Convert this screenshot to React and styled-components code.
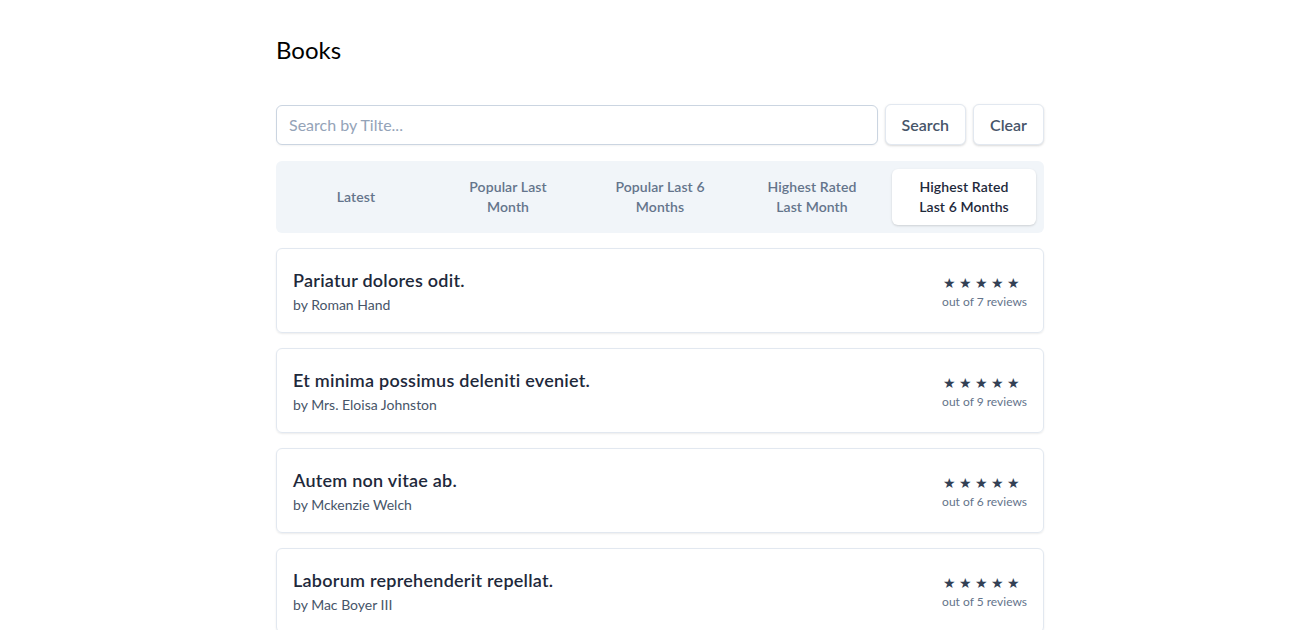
import React from 'react';
import styled, { createGlobalStyle } from 'styled-components';

const GlobalStyle = createGlobalStyle`
  * { box-sizing: border-box; }
  body {
    margin: 0;
    background: #fff;
    font-family: Lato, "Noto Sans", sans-serif;
    color: #0f172a;
  }
`;

const Page = styled.div`
  width: 780px;
  margin: 0 auto;
  padding: 34px 0 0 12px;
`;

const Title = styled.h1`
  margin: 0 0 38px;
  font-size: 24px;
  line-height: 32px;
  font-weight: 400;
  color: #000;
`;

const SearchRow = styled.form`
  display: flex;
  align-items: center;
  gap: 7px;
  margin-bottom: 16px;
`;

const SearchInput = styled.input`
  flex: 1;
  height: 40px;
  border: 1px solid #cbd5e1;
  border-radius: 6px;
  padding: 0 12px;
  font-family: inherit;
  font-size: 16px;
  color: #0f172a;
  box-shadow: 0 1px 2px rgba(0, 0, 0, 0.05);
  outline: none;
  &::placeholder { color: #94a3b8; }
`;

const Button = styled.button`
  height: 41px;
  padding: 0 16px;
  border: 1px solid #e2e8f0;
  border-radius: 6px;
  background: #fff;
  font-family: inherit;
  font-size: 16px;
  font-weight: 600;
  color: #475569;
  box-shadow: 0 1px 3px rgba(0, 0, 0, 0.1), 0 1px 2px rgba(0, 0, 0, 0.06);
  cursor: pointer;
`;

const Tabs = styled.div`
  display: flex;
  gap: 8px;
  padding: 8px;
  background: #f1f5f9;
  border-radius: 6px;
  margin-bottom: 15px;
`;

const Tab = styled.div`
  flex: 1;
  height: 56px;
  display: flex;
  align-items: center;
  justify-content: center;
  text-align: center;
  padding: 0 16px;
  font-size: 14px;
  line-height: 20px;
  font-weight: 600;
  letter-spacing: 0.1px;
  border-radius: 6px;
  color: ${(p) => (p.$active ? '#1e293b' : '#64748b')};
  background: ${(p) => (p.$active ? '#fff' : 'transparent')};
  box-shadow: ${(p) => (p.$active ? '0 1px 3px rgba(0,0,0,0.1), 0 1px 2px rgba(0,0,0,0.06)' : 'none')};
`;

const List = styled.div`
  display: flex;
  flex-direction: column;
  gap: 15px;
`;

const Card = styled.div`
  display: flex;
  justify-content: space-between;
  align-items: center;
  padding: 17px 16px 17px;
  border: 1px solid #e2e8f0;
  border-radius: 6px;
  box-shadow: 0 1px 2px rgba(0, 0, 0, 0.08);
`;

const BookTitle = styled.div`
  font-size: 18px;
  line-height: 28px;
  font-weight: 600;
  letter-spacing: 0.25px;
  color: #1e293b;
`;

const Author = styled.div`
  margin-top: 1px;
  font-size: 14px;
  line-height: 20px;
  color: #475569;
`;

const Rating = styled.div`
  display: flex;
  flex-direction: column;
  gap: 2px;
  padding-top: 3px;
`;

const Stars = styled.div`
  padding-left: 1px;
  font-size: 14px;
  line-height: 18px;
  letter-spacing: 3px;
  color: #334155;
`;

const Reviews = styled.div`
  font-size: 12px;
  line-height: 16px;
  color: #64748b;
`;

const tabs = [
  'Latest',
  'Popular Last Month',
  'Popular Last 6 Months',
  'Highest Rated Last Month',
  'Highest Rated Last 6 Months',
];

const books = [
  { title: 'Pariatur dolores odit.', author: 'Roman Hand', reviews: 7 },
  { title: 'Et minima possimus deleniti eveniet.', author: 'Mrs. Eloisa Johnston', reviews: 9 },
  { title: 'Autem non vitae ab.', author: 'Mckenzie Welch', reviews: 6 },
  { title: 'Laborum reprehenderit repellat.', author: 'Mac Boyer III', reviews: 5 },
];

export default function App() {
  return (
    <Page>
      <GlobalStyle />
      <Title>Books</Title>
      <SearchRow onSubmit={(e) => e.preventDefault()}>
        <SearchInput placeholder="Search by Tilte..." />
        <Button type="submit">Search</Button>
        <Button type="button">Clear</Button>
      </SearchRow>
      <Tabs>
        {tabs.map((t, i) => (
          <Tab key={t} $active={i === tabs.length - 1}>{t}</Tab>
        ))}
      </Tabs>
      <List>
        {books.map((b) => (
          <Card key={b.title}>
            <div>
              <BookTitle>{b.title}</BookTitle>
              <Author>by {b.author}</Author>
            </div>
            <Rating>
              <Stars>★★★★★</Stars>
              <Reviews>out of {b.reviews} reviews</Reviews>
            </Rating>
          </Card>
        ))}
      </List>
    </Page>
  );
}
